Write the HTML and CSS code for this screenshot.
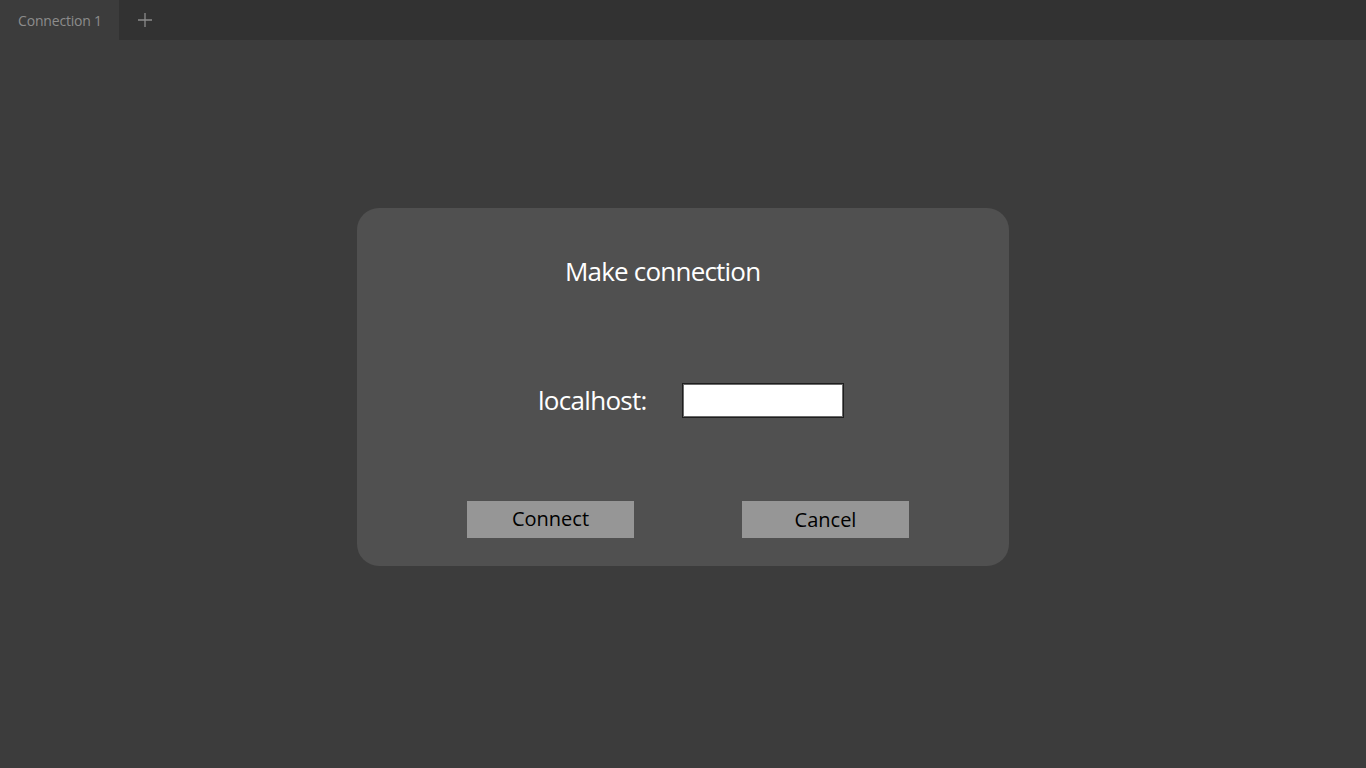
FILE: index.html
```html
<!DOCTYPE html>
<html>
<head>
<meta charset="utf-8">
<link rel="stylesheet" href="styles.css">
</head>
<body>
<div class="tabbar">
  <div class="tab">Connection 1</div>
  <div class="add"><svg width="16" height="16" viewBox="0 0 16 16"><path d="M8 1v14M1 8h14" stroke="#8a8a8a" stroke-width="1.3" fill="none"/></svg></div>
</div>
<main class="stage">
  <section class="dialog">
    <h1 class="title">Make connection</h1>
    <div class="row">
      <label class="label">localhost:</label>
      <input class="field" type="text">
    </div>
    <div class="buttons">
      <button class="btn">Connect</button>
      <button class="btn btn-cancel">Cancel</button>
    </div>
  </section>
</main>
</body>
</html>
```
FILE: styles.css
```css
html, body {
  margin: 0;
  padding: 0;
  height: 100%;
}
body {
  background: #3c3c3c;
  font-family: "Open Sans", "Noto Sans", sans-serif;
  overflow: hidden;
}
.tabbar {
  display: flex;
  height: 40px;
  background: #323232;
}
.tab {
  width: 119px;
  background: #3c3c3c;
  color: #8c8c8c;
  font-size: 14px;
  display: flex;
  align-items: center;
  justify-content: center;
  letter-spacing: -0.2px;
  padding-left: 1px;
  box-sizing: border-box;
}
.add {
  width: 52px;
  display: flex;
  align-items: center;
  justify-content: center;
}
.stage {
  display: flex;
  justify-content: center;
  padding-top: 168px;
}
.dialog {
  width: 652px;
  height: 358px;
  box-sizing: border-box;
  background: #505050;
  border-radius: 22px;
  display: flex;
  flex-direction: column;
}
.title {
  margin: 0;
  padding: 46px 0 0 208px;
  font-weight: 400;
  font-size: 26px;
  letter-spacing: -0.8px;
  color: #fff;
  line-height: 34px;
}
.row {
  display: flex;
  align-items: center;
  padding: 94px 0 0 181px;
}
.label {
  color: #fff;
  font-size: 26px;
  letter-spacing: -0.7px;
  width: 144px;
}
.field {
  width: 162px;
  height: 35px;
  box-sizing: border-box;
  border: 1px solid #1e1e1e;
  box-shadow: inset 0 0 0 1px #6a6a6a;
  background: #fff;
  margin: 0;
  padding: 0;
}
.buttons {
  display: flex;
  gap: 108px;
  padding: 83px 0 0 110px;
}
.btn {
  width: 167px;
  height: 37px;
  border: 0;
  background: #969696;
  color: #000;
  font-family: inherit;
  font-size: 20px;
  padding: 0 0 2px;
}
.btn-cancel {
  padding: 0;
}
```
